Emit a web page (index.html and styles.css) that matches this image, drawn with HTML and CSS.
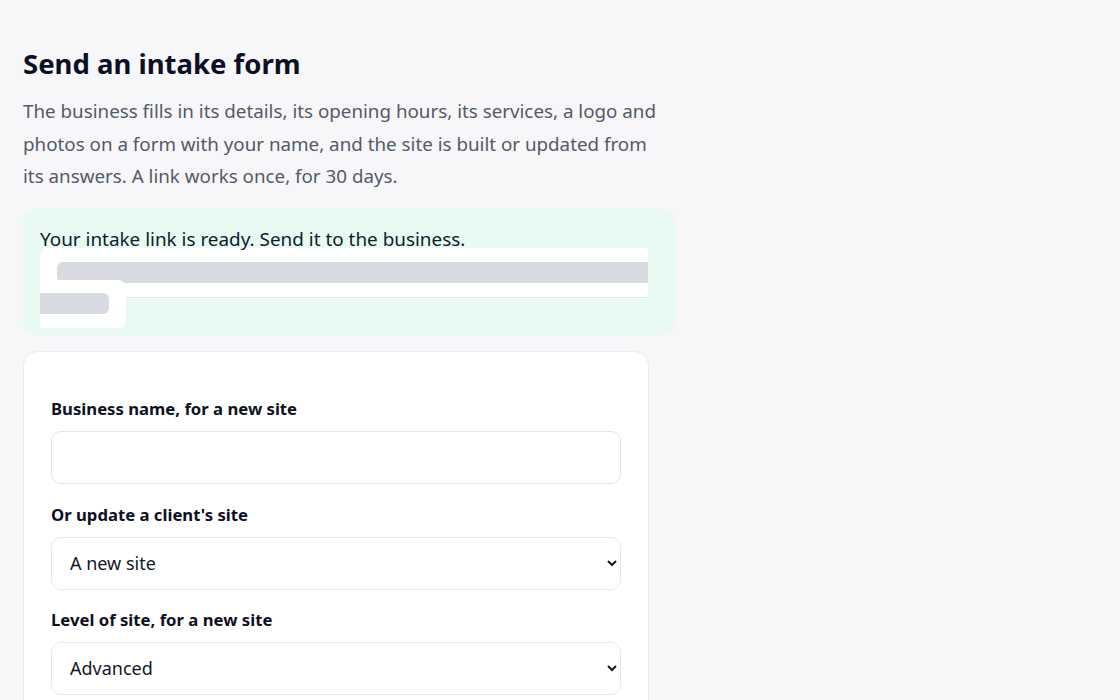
FILE: index.html
```html
<!DOCTYPE html>
<html lang="en">
<head>
<meta charset="utf-8">
<title>Send an intake form</title>
<link rel="stylesheet" href="styles.css">
</head>
<body>
<main class="page">
  <h1 class="title">Send an intake form</h1>
  <p class="lead">The business fills in its details, its opening hours, its services, a logo and photos on a form with your name, and the site is built or updated from its answers. A link works once, for 30 days.</p>

  <section class="ready">
    <p class="ready-text">Your intake link is ready. Send it to the business.</p>
    <div class="ready-clip">
      <div class="strip"><div class="strip-bar"></div></div>
      <div class="chip"><div class="chip-bar"></div></div>
    </div>
  </section>

  <form class="card">
    <div class="field">
      <label class="label" for="bname">Business name, for a new site</label>
      <input class="control" id="bname" type="text">
    </div>
    <div class="field">
      <label class="label" for="client">Or update a client's site</label>
      <select class="control select" id="client">
        <option>A new site</option>
      </select>
    </div>
    <div class="field">
      <label class="label" for="level">Level of site, for a new site</label>
      <select class="control select" id="level">
        <option>Advanced</option>
      </select>
    </div>
  </form>
</main>
</body>
</html>
```
FILE: styles.css
```css
* { box-sizing: border-box; }
html, body { margin: 0; padding: 0; }
body {
  background: #f7f7f9;
  font-family: "Noto Sans", "Open Sans", sans-serif;
  color: #0f1325;
}
.page {
  width: 652px;
  margin-left: 23px;
  padding-top: 46px;
}
.title {
  margin: 0;
  font-size: 27.5px;
  line-height: 35px;
  font-weight: 700;
  color: #0b1024;
}
.lead {
  max-width: 640px;
  margin: 14px 0 0;
  font-size: 18.8px;
  line-height: 32.5px;
  color: #545a66;
}
.ready {
  margin-top: 16px;
  background: #e9faf2;
  border-radius: 12px;
  padding: 15px 0 7px 17px;
}
.ready-text {
  margin: 0;
  font-size: 18.9px;
  line-height: 30px;
  color: #0f1a2e;
}
.ready-clip {
  width: 608px;
  margin-top: -6px;
  overflow: hidden;
}
.strip {
  height: 50px;
  background: #fff;
  border-bottom: 1px solid #e3e5ea;
  border-top-left-radius: 8px;
  padding: 14px 0 0 17px;
}
.strip-bar {
  width: 700px;
  height: 21px;
  background: #d8dae1;
  border-radius: 6px 0 0 6px;
}
.chip {
  width: 86px;
  height: 48px;
  margin-top: -18px;
  background: #fff;
  border-radius: 0 8px 8px 0;
  padding-top: 13px;
}
.chip-bar {
  width: 69px;
  height: 21px;
  background: #d8dae1;
  border-radius: 0 6px 6px 0;
}
.card {
  margin-top: 16px;
  width: 626px;
  background: #fff;
  border: 1px solid #ebebef;
  border-radius: 14px;
  padding: 45px 27px 30px;
}
.field + .field { margin-top: 19px; }
.field + .field + .field { margin-top: 18px; }
.label {
  display: block;
  font-size: 16.7px;
  line-height: 24px;
  font-weight: 700;
  color: #0d1122;
  margin-bottom: 10px;
}
.control {
  display: block;
  width: 100%;
  height: 53px;
  border: 1px solid #e5e7eb;
  border-radius: 10px;
  background: #fff;
  font-family: inherit;
  font-size: 18px;
  color: #111827;
  padding: 0 10px 0 18px;
}
.select { padding: 0 6px 0 14px; }
```
